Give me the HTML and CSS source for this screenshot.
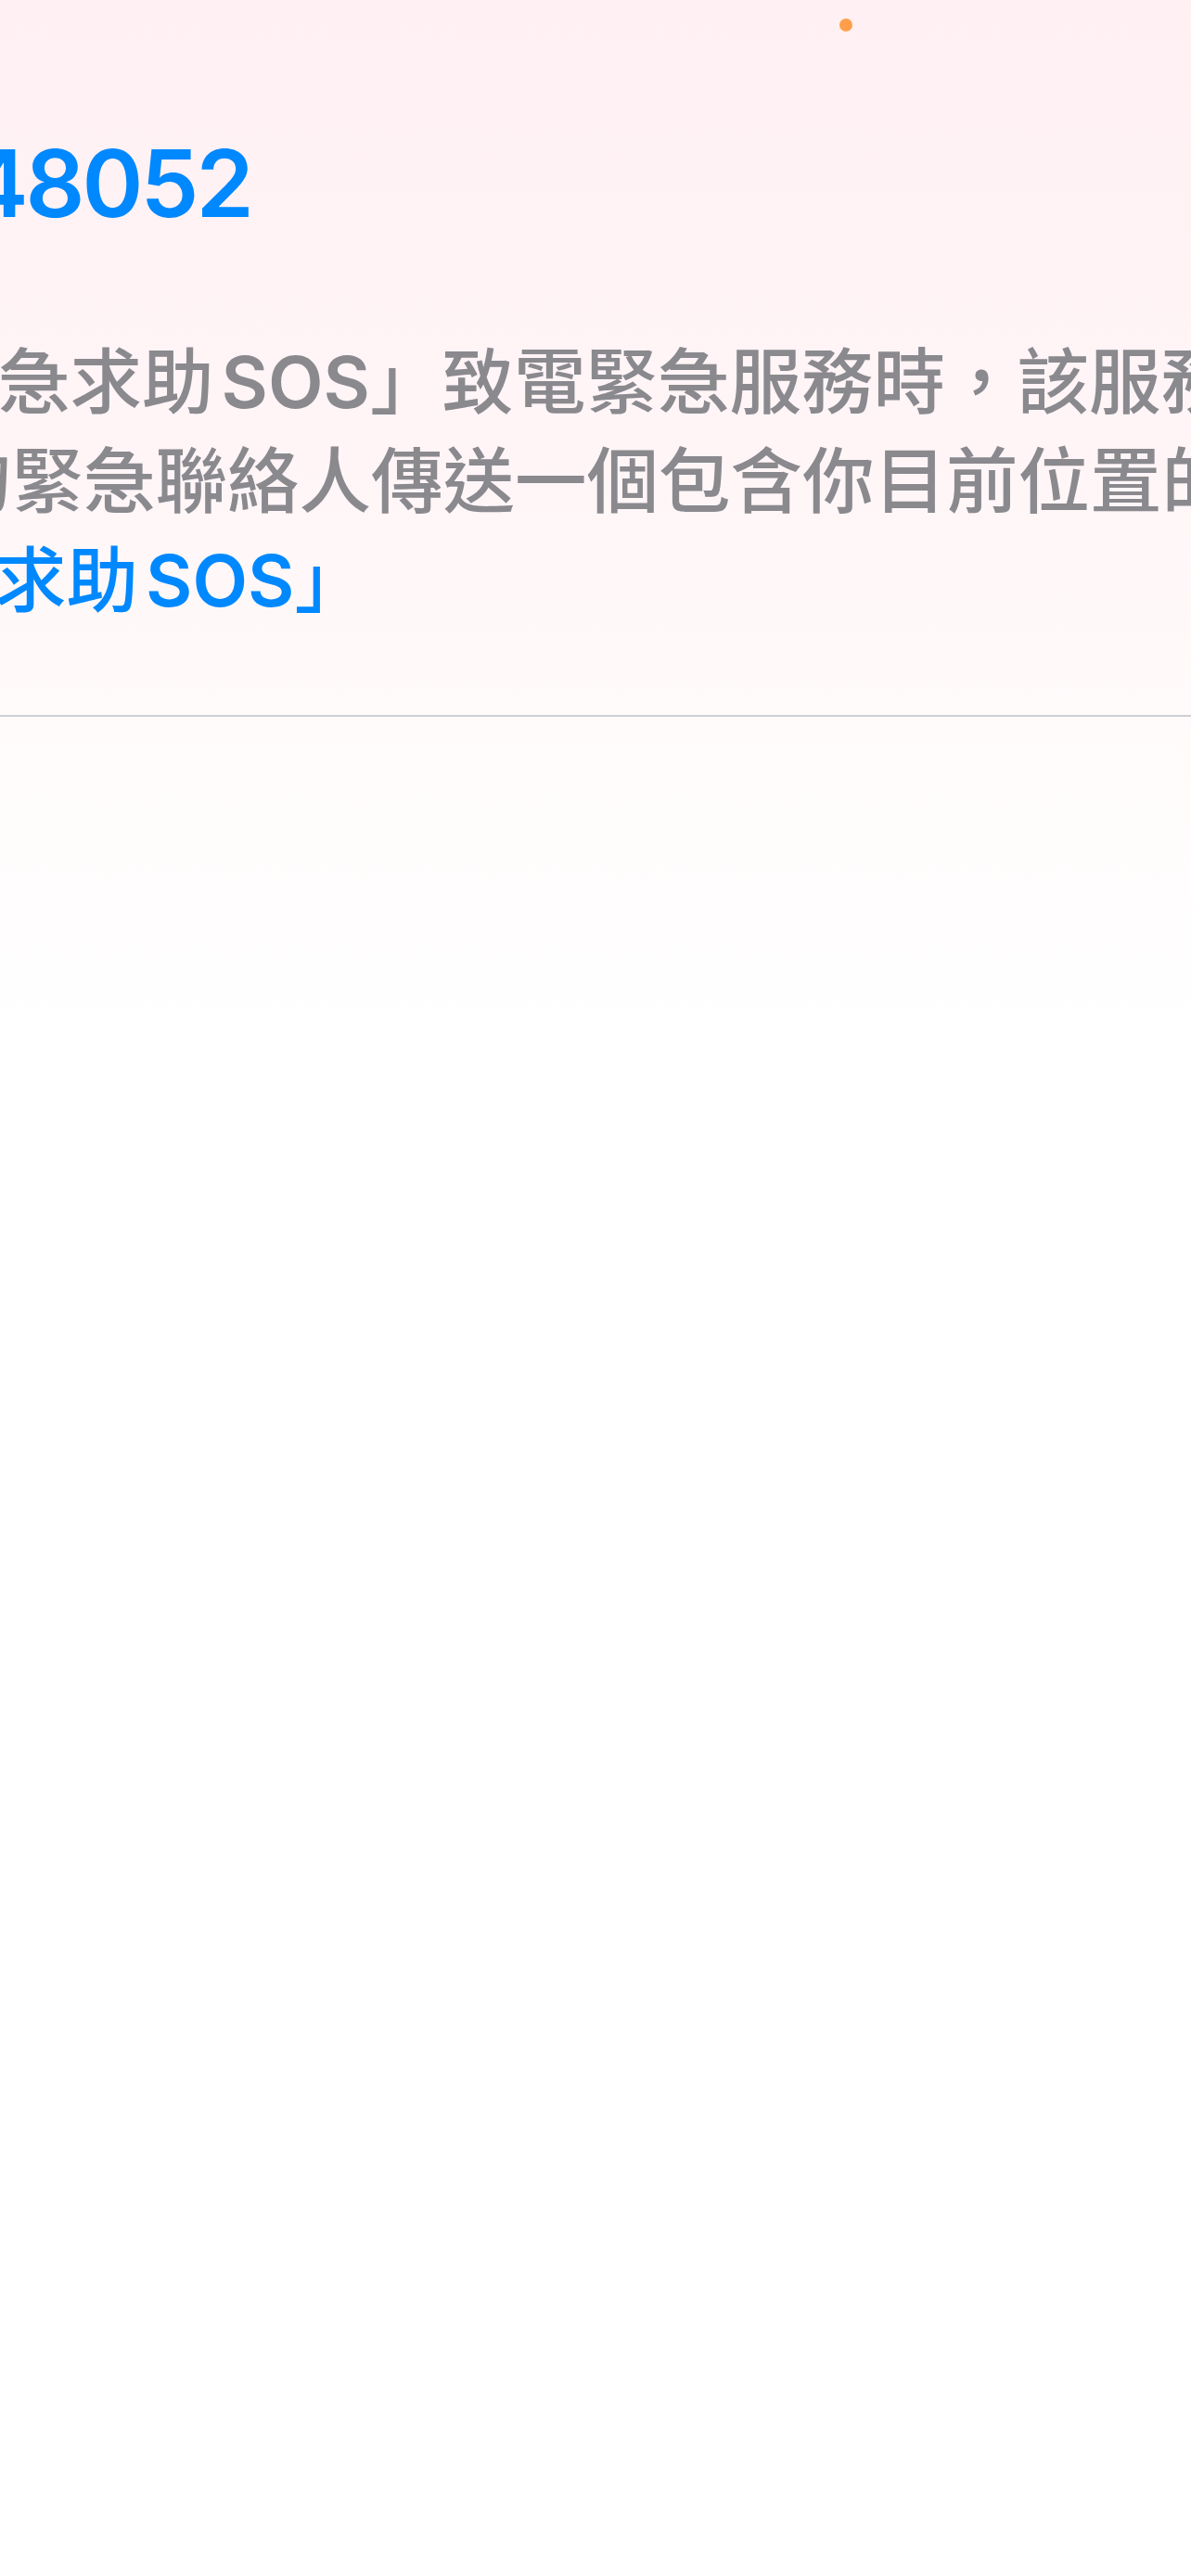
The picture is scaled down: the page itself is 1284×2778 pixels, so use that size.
FILE: index.html
```html
<!DOCTYPE html>
<html lang="zh-Hant">
<head>
    <meta charset="UTF-8">
    <meta name="viewport" content="width=device-width, initial-scale=1.0">
    <title>緊急求助 SOS</title>
    <link rel="stylesheet" href="styles.css">
</head>
<body>
<div class="screen">
    <!-- privacy indicator in the status bar -->
    <span class="mic-dot"></span>

    <div class="phone-number">48052</div>

    <p class="footnote">
        <span class="line line-1">急求助<span class="latin">SOS</span>」致電緊急服務時，該服務會向你</span>
        <span class="line line-2">的緊急聯絡人傳送一個包含你目前位置的訊息。</span>
    </p>

    <a class="sos-link" href="#">求助<span class="latin">SOS</span>」</a>

    <hr class="divider">
</div>
</body>
</html>
```

FILE: styles.css
```css
html, body {
    margin: 0;
    padding: 0;
}

body {
    width: 1284px;
    height: 2778px;
    overflow: hidden;
    background: linear-gradient(to bottom, #fff0f3 0, #fff5f7 500px, #fffbfb 800px, #ffffff 1150px);
    font-family: 'Inter', 'Noto Sans CJK TC', 'Noto Sans', sans-serif;
}

.screen {
    position: relative;
    height: 100%;
}

.mic-dot {
    position: absolute;
    top: 20px;
    left: 905px;
    width: 14px;
    height: 14px;
    border-radius: 50%;
    background-color: #ff9f4a;
}

.phone-number {
    padding-top: 138px;
    margin-left: -36px;
    font-family: 'Inter', 'Liberation Sans', sans-serif;
    font-size: 100px;
    font-weight: 600;
    letter-spacing: -3px;
    line-height: 120px;
    color: #0088ff;
    white-space: nowrap;
}

.footnote {
    margin: 101px 0 0;
    font-size: 77.5px;
    font-weight: 500;
    line-height: 107px;
    color: #8a898e;
}

.line {
    display: block;
    white-space: nowrap;
}

.line-1 {
    margin-left: -2px;
}

.line-2 {
    margin-left: -65px;
}

.latin {
    margin-left: 8px;
    font-weight: 600;
}

.sos-link {
    display: block;
    margin-left: -6px;
    font-size: 77.5px;
    font-weight: 500;
    line-height: 107px;
    color: #0088ff;
    text-decoration: none;
    white-space: nowrap;
}

.divider {
    margin: 91px 0 0;
    border: none;
    height: 2px;
    background-color: #cfcfd3;
}
```
